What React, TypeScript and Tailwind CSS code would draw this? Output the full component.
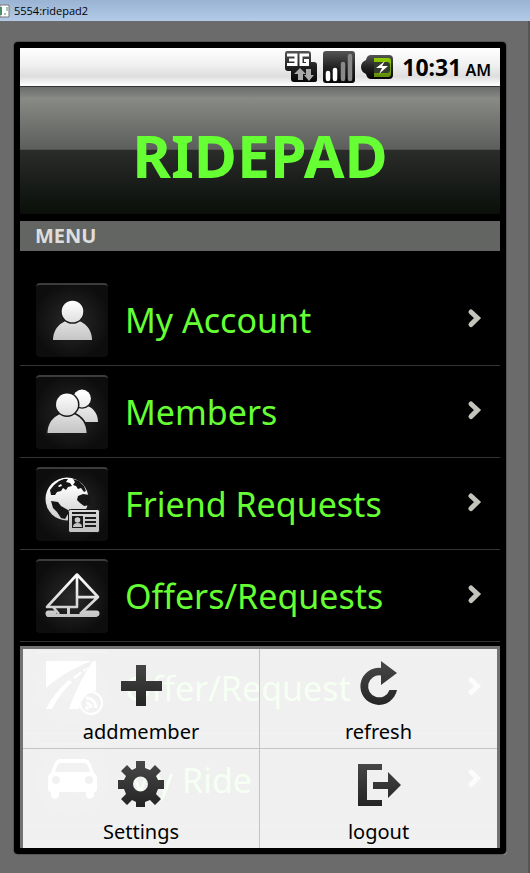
import type { ReactNode } from "react";

function IconDefs() {
  return (
    <svg width="0" height="0" className="absolute" aria-hidden="true">
      <defs>
        <linearGradient id="silver" x1="0" y1="0" x2="0" y2="72" gradientUnits="userSpaceOnUse">
          <stop offset="0.25" stopColor="#ffffff" />
          <stop offset="0.8" stopColor="#c4c4c4" />
        </linearGradient>
        <linearGradient id="dark" x1="0" y1="0" x2="0" y2="48" gradientUnits="userSpaceOnUse">
          <stop offset="0" stopColor="#484848" />
          <stop offset="1" stopColor="#222222" />
        </linearGradient>
        <linearGradient id="chip" x1="0" y1="0" x2="0" y2="1">
          <stop offset="0" stopColor="#555555" />
          <stop offset="0.5" stopColor="#222222" />
          <stop offset="1" stopColor="#050505" />
        </linearGradient>
        <linearGradient id="charge" x1="0" y1="0" x2="0" y2="1">
          <stop offset="0" stopColor="#8fd000" />
          <stop offset="1" stopColor="#5f8a0a" />
        </linearGradient>
      </defs>
    </svg>
  );
}

function Tile({ children }: { children: ReactNode }) {
  return (
    <span className="block h-[74px] w-[72px] shrink-0 rounded-[4px] border-t-2 border-[#3c3c3c] bg-[radial-gradient(circle,#2a2a2a_0%,#0d0d0d_75%)]">
      <svg viewBox="0 2 72 72" className="size-[72px]" fill="url(#silver)" aria-hidden="true">
        {children}
      </svg>
    </span>
  );
}

const account = (
  <>
    <path d="M17 57c0-11 8-20 19.500-20S56 46 56 57z" />
    <circle cx="36.500" cy="28.500" r="12.300" fill="#191919" />
    <circle cx="36.500" cy="28.500" r="10.800" />
  </>
);

const members = (
  <>
    <path d="M31 47c0-9 5-17 15-17s16 8 16 17z" />
    <circle cx="46" cy="23.500" r="10.300" fill="#191919" />
    <circle cx="46" cy="23.500" r="8.900" />
    <path d="M11 59c0-12 8-21 20-21s20 9 20 21z" fill="#191919" stroke="#191919" strokeWidth="3" />
    <path d="M11.500 58c0-11 8-20 19.500-20s19.500 9 19.500 20z" />
    <circle cx="31" cy="29.500" r="12.500" fill="#191919" />
    <circle cx="31" cy="29.500" r="11" />
  </>
);

const globe = (
  <>
    <circle cx="31" cy="32" r="21.500" />
    <g fill="#161616">
      <path d="M14 23l4-5 5-4 5-2 4 0-2 3 4 1 2 3-4 1-2 3-3-2-2 3-4 1-2 3-4 0z" />
      <path d="M37 12l6 2 5 5 2 5-2 1-3-4-3 1-2-3-3-1 2-3z" />
      <path d="M15 34l7 1 3 4 7 4 0 4-3 5-4-1-4-6-4-4z" />
      <path d="M42 29l5-2 7 1 1 10-7 1-4-3-3-3z" />
    </g>
    <path d="M22 19l3-2 1 2-3 1z" />
    <rect x="32.500" y="42.500" width="31" height="23" rx="2" stroke="#161616" />
    <g fill="#1a1a1a">
      <path d="M36 45h24v2H36zM49 50h11v2H49zM49 54h11v2H49zM49 58h11v2H49zM36 49h11v12H36z" />
    </g>
    <circle cx="41.500" cy="53" r="2.800" />
    <path d="M37 60c0-3 2-4 4.500-4s4.500 1 4.500 4z" />
  </>
);

const boat = (
  <g fill="none" stroke="url(#silver)" strokeWidth="2.600" strokeLinejoin="round">
    <path d="M41 15.500L11 48h30zM41 15.500V48M41 15.500l21 22.500-20.500.1M62 38L44 55M11 48h6l6 7" />
    <path d="M32.500 48v7" strokeWidth="3" />
    <path d="M12 56.500h48" strokeWidth="3" strokeLinecap="round" />
    <path d="M48 54.500h12.500M12.500 54.500h5" strokeWidth="6" strokeLinecap="round" />
  </g>
);

const road = (
  <g fill="#fff">
    <path d="M10 10h46C36 17 20 28 10 37z" />
    <path d="M60 10v30c-9 1-15 8-17 18H33C40 38 49 22 57 10z" />
    <path d="M10 58C16 46 24 37 33 29l3 2C27 40 21 48 16 58zM37 26l7-5 2 1-7 6zM47 19l7-4-6 6z" />
    <circle cx="55" cy="52" r="11" fill="none" stroke="#fff" strokeWidth="2" />
    <path d="M50 47c6 0 10 4 10 10M50 52c3 0 5 2 5 5" fill="none" stroke="#fff" strokeWidth="3" />
    <circle cx="51" cy="57" r="2" />
  </g>
);

const car = (
  <path
    fill="#fff"
    fillRule="evenodd"
    d="M25 16h23c4 0 6 3 7 6l3 8c2 1 3 3 3 5v11c0 2-1 3-3 3v3c0 5-8 5-8 0v-3H23v3c0 5-8 5-8 0v-3c-2 0-3-1-3-3V35c0-2 1-4 3-5l3-8c1-3 3-6 7-6zm0 4c-2 0-3 1-4 3l-2 6h35l-2-6c-1-2-2-3-4-3zM20 33a4 4 0 100 8 4 4 0 000-8zm33 0a4 4 0 100 8 4 4 0 000-8z"
  />
);

const items = [
  { label: "My Account", icon: account },
  { label: "Members", icon: members },
  { label: "Friend Requests", icon: globe },
  { label: "Offers/Requests", icon: boat },
  { label: "Offer/Request", icon: road },
  { label: "My Ride", icon: car },
];

const options = [
  { label: "addmember", icon: <path d="M19 4h10v16h16v10H29v15H19V30H4V20h15z" /> },
  {
    label: "refresh",
    icon: <path d="M26 0l16 12-16 12v-9.500A11 11 0 1034.500 29H42A18.500 18.500 0 1126 7z" />,
  },
  {
    label: "Settings",
    icon: (
      <path
        fillRule="evenodd"
        d="M19 0h9v7l5 2 5-5 6 6-5 5 2 4h6v9h-6l-2 5 5 5-6 6-5-5-5 2v5h-9v-5l-4-2-5 5-6-6 5-5-2-5H1v-9h6l2-4-5-5 6-6 5 5 4-2zm4.500 15.500a7.500 7.500 0 100 15 7.500 7.500 0 000-15z"
      />
    ),
  },
  { label: "logout", icon: <path d="M3 3h24v6H12v30h15v6H3zM18 21h15V11l13 13-13 13v-9H18z" /> },
];

function StatusBar() {
  return (
    <div className="flex h-[39px] items-center justify-end gap-[6px] border-b border-[#333] bg-[linear-gradient(#fff_0%,#f0f0f0_45%,#dedede_75%,#fff_100%)] pr-[9px]">
      <svg width="32" height="32" viewBox="0 0 32 32" role="img" aria-label="3G">
        <path d="M2 0h21q3 0 3 3v8h3q3 0 3 3v15q0 2-3 2H9q-3 0-3-3v-8H3q-3 0-3-3V3q0-3 2-3z" fill="url(#chip)" />
        <path d="M2 4h9v9.500H2M4 9h7M24 4h-8v9.500h6.500V9.500H19" fill="none" stroke="#fff" strokeWidth="3" />
        <path d="M15 17l6 6h-3v6h-5v-6H9zM24 30l-5-6h2v-6h5v6h3z" fill="#aaa" />
      </svg>
      <svg width="32" height="32" viewBox="0 0 32 32" role="img" aria-label="Signal">
        <rect width="32" height="32" rx="3" fill="url(#chip)" />
        <g strokeWidth="4.500" strokeLinecap="round">
          <path d="M5 22v6M12 19v9" stroke="#fff" />
          <path d="M20 13v15M27 5v23" stroke="#888" />
        </g>
      </svg>
      <svg width="32" height="32" viewBox="0 0 32 32" role="img" aria-label="Battery charging">
        <path d="M10 4h18q4 0 4 4v16q0 4-4 4H10q-4 0-5-5-5-2-5-7t5-7q1-5 5-5z" fill="url(#chip)" />
        <path d="M13 7h14q3 0 3 3v13q0 3-3 3H13z" fill="url(#charge)" />
        <path d="M13 11h13q3 0 3 3v5q0 3-3 3H13z" fill="#343a2c" />
        <path d="M24 10l-9 7h6l-3 6 9-8h-6z" fill="#fff" />
      </svg>
      <p className="ml-[3px] flex items-baseline gap-1 font-bold leading-8 text-black">
        <span className="text-[23px]">10:31</span>
        <span className="text-base font-semibold">AM</span>
      </p>
    </div>
  );
}

export default function App() {
  return (
    <div className="min-h-screen border-r-2 border-[#555] bg-[#6b6b6b] font-['Noto_Sans','Open_Sans',sans-serif]">
      <IconDefs />
      <header className="-mr-[2px] flex h-[21px] items-center gap-1 bg-linear-to-b from-[#9ab3d3] to-[#b3cbe8] text-black">
        <svg width="10" height="14" viewBox="0 0 10 14" aria-hidden="true">
          <path d="M0 1h9v12H0z" fill="#fff" stroke="#777" />
          <path d="M0 3h2v8H0z" fill="#4a9070" />
          <path d="M7 3v4M4 10h2" stroke="#4a9070" />
        </svg>
        <span className="font-['Open_Sans',sans-serif] text-[11px] leading-4">5554:ridepad2</span>
      </header>

      <div className="pt-[21px] pr-[22px] pb-[19px] pl-[14px]">
        <main className="rounded-[4px] bg-black p-[6px] shadow-[0_0_0_1px_#555,1px_1px_0_0_#a0a0a0]">
          <div className="relative overflow-hidden pb-[22px]">
            <StatusBar />
            <div className="flex h-[127px] items-center justify-center bg-[linear-gradient(#6a6c69_0%,#888a86_9%,#5c5e5b_49%,#2b2c2a_50%,#161a16_80%,#0a0f0a_100%)]">
              <h1 className="pt-2 text-[59px] leading-[80px] font-bold text-[#66ff33]">RIDEPAD</h1>
            </div>
            <h2 className="mt-[7px] bg-[#636562] px-[15px] text-xl leading-[30px] font-bold text-[#dedede]">MENU</h2>
            <ul className="pt-[23px]">
              {items.map((item) => (
                <li key={item.label} className="border-b border-[#333]">
                  <a href="#" className="flex h-[91px] items-center gap-[17px] px-4 text-[#66ff33]">
                    <Tile>{item.icon}</Tile>
                    <span className="grow text-[34px] leading-[48px] whitespace-nowrap">{item.label}</span>
                    <svg width="18" height="24" viewBox="0 0 18 24" aria-hidden="true">
                      <path d="M5 4l6.500 6L5 16.500" fill="none" stroke="#c4c4bc" strokeWidth="5" strokeLinecap="round" />
                    </svg>
                  </a>
                </li>
              ))}
            </ul>

            <div className="absolute inset-x-0 bottom-0 border-x-[3px] border-t-[3px] border-[#737373]">
              <div className="grid grid-cols-2 grid-rows-[100px_99px] bg-white/94">
                {options.map((option) => (
                  <button
                    key={option.label}
                    type="button"
                    className="flex flex-col items-center justify-start gap-[11px] border-[#c4c4c4] pt-3 text-black odd:border-r nth-[-n+2]:border-b"
                  >
                    <svg width="48" height="48" viewBox="0 0 48 48" fill="url(#dark)" className="shrink-0" aria-hidden="true">
                      {option.icon}
                    </svg>
                    <span className="text-xl leading-6">{option.label}</span>
                  </button>
                ))}
              </div>
            </div>
          </div>
        </main>
      </div>
    </div>
  );
}
